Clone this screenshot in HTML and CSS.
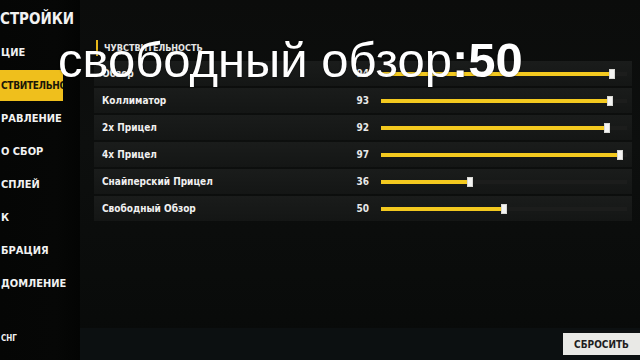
FILE: index.html
```html
<!DOCTYPE html>
<html lang="ru">
<head>
<meta charset="utf-8">
<title>Настройки</title>
<link rel="stylesheet" href="styles.css">
</head>
<body>
<div class="app">
  <aside class="sidebar">
    <div class="side-title">СТРОЙКИ</div>
    <div class="side-item">ЦИЕ</div>
    <div class="side-item active"><span>СТВИТЕЛЬНО</span></div>
    <div class="side-item">РАВЛЕНИЕ</div>
    <div class="side-item">О СБОР</div>
    <div class="side-item">СПЛЕЙ</div>
    <div class="side-item">К</div>
    <div class="side-item">БРАЦИЯ</div>
    <div class="side-item">ДОМЛЕНИЕ</div>
    <div class="side-region">СНГ</div>
  </aside>
  <main class="main">
    <section class="content">
      <div class="section-head">ЧУВСТВИТЕЛЬНОСТЬ</div>
      <div class="rows">
        <div class="row"><span class="label">Обзор</span><span class="value">94</span><div class="track"><div class="fill" style="width:94%"><i class="thumb"></i></div></div></div>
        <div class="row"><span class="label">Коллиматор</span><span class="value">93</span><div class="track"><div class="fill" style="width:93%"><i class="thumb"></i></div></div></div>
        <div class="row"><span class="label">2x Прицел</span><span class="value">92</span><div class="track"><div class="fill" style="width:92%"><i class="thumb"></i></div></div></div>
        <div class="row"><span class="label">4x Прицел</span><span class="value">97</span><div class="track"><div class="fill" style="width:97%"><i class="thumb"></i></div></div></div>
        <div class="row"><span class="label">Снайперский Прицел</span><span class="value">36</span><div class="track"><div class="fill" style="width:36%"><i class="thumb"></i></div></div></div>
        <div class="row"><span class="label">Свободный Обзор</span><span class="value">50</span><div class="track"><div class="fill" style="width:50%"><i class="thumb"></i></div></div></div>
      </div>
    </section>
    <footer class="footer">
      <button class="reset">СБРОСИТЬ</button>
    </footer>
  </main>
</div>
<div class="caption">свободный обзор<b>:50</b></div>
</body>
</html>
```
FILE: styles.css
```css
html, body {
  margin: 0;
  padding: 0;
}
body {
  width: 640px;
  height: 360px;
  overflow: hidden;
  background: #080908;
  font-family: "Liberation Sans Narrow", "DejaVu Sans Condensed", "Liberation Sans", sans-serif;
  font-stretch: condensed;
  color: #f2f2f2;
  position: relative;
}
.app {
  display: flex;
  height: 360px;
}
.sidebar {
  width: 80px;
  flex: none;
  display: flex;
  flex-direction: column;
  background: linear-gradient(to right, #050605 0, #060706 70%, #030403 100%);
  overflow: hidden;
}
.side-title {
  height: 36px;
  line-height: 38px;
  font-size: 15px;
  font-weight: 700;
  white-space: nowrap;
}
.side-item {
  height: 33px;
  line-height: 33px;
  font-size: 11px;
  font-weight: 700;
  white-space: nowrap;
  padding-left: 1px;
}
.side-item.active {
  width: 62px;
  height: 31px;
  line-height: 31px;
  margin: 1px 0;
  background: #efbf1c;
  color: #1a1708;
  overflow: hidden;
  font-size: 10px;
  letter-spacing: -0.3px;
}
.side-region {
  margin-top: auto;
  font-size: 8px;
  font-weight: 700;
  padding-left: 1px;
  padding-bottom: 17px;
}
.main {
  flex: 1;
  display: flex;
  flex-direction: column;
  background: linear-gradient(to bottom, #0b0c0b 0, #0d0f0e 40%, #080a09 100%);
}
.content {
  flex: 1;
  padding: 40px 8px 0 14px;
}
.section-head {
  height: 16px;
  line-height: 16px;
  font-size: 9px;
  font-weight: 700;
  color: #e6e6e6;
  padding-left: 6px;
  border-left: 2px solid #e8b81a;
  margin-left: 2px;
}
.rows {
  margin-top: 5px;
  display: flex;
  flex-direction: column;
  gap: 2px;
}
.row {
  height: 25px;
  display: grid;
  grid-template-columns: 1fr 30px 246px;
  column-gap: 12px;
  align-items: center;
  padding: 0 5px 0 8px;
  background: linear-gradient(to bottom, #1a1c1b, #141615);
  font-size: 10px;
  font-weight: 700;
}
.label {
  color: #f0f0f0;
}
.value {
  text-align: right;
  color: #e8e8e8;
}
.track {
  height: 4px;
  background: #1c1d1c;
  position: relative;
}
.fill {
  height: 4px;
  background: #f3c91f;
  position: relative;
}
.thumb {
  position: absolute;
  right: -3px;
  top: -3px;
  width: 6px;
  height: 10px;
  background: #f4f4f2;
  box-sizing: border-box;
  border: 1px solid #d8d8d4;
}
.footer {
  height: 32px;
  display: flex;
  justify-content: flex-end;
  align-items: flex-start;
  background: #0c1011;
}
.reset {
  margin-top: 5px;
  width: 77px;
  height: 22px;
  border: 0;
  padding: 0;
  background: #e9e9e6;
  color: #1e1e1e;
  font-family: "Liberation Sans Narrow", "DejaVu Sans Condensed", "Liberation Sans", sans-serif;
  font-size: 10px;
  font-weight: 700;
}
.caption {
  position: absolute;
  left: 58px;
  top: 36px;
  font-family: "Liberation Sans", Arial, sans-serif;
  font-stretch: normal;
  font-size: 49px;
  line-height: 48px;
  color: #ffffff;
  white-space: nowrap;
  text-shadow: 0 0 2px rgba(0,0,0,0.6);
}
.caption b {
  font-weight: 700;
}
```
